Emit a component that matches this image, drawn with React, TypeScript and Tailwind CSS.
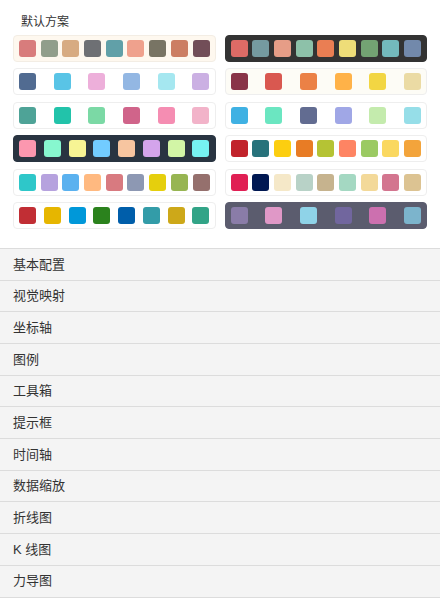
const plans: { bg: string; border: string; colors: string[] }[] = [
  { bg: "#fef8ef", border: "#f3ede4", colors: ["#d87c7c", "#919e8b", "#d7ab82", "#6e7074", "#61a0a8", "#efa18d", "#787464", "#cc7e63", "#724e58"] },
  { bg: "#333333", border: "#333333", colors: ["#dd6b66", "#759aa0", "#e69d87", "#8dc1a9", "#ea7e53", "#eedd78", "#73a373", "#73b9bc", "#7289ab"] },
  { bg: "#ffffff", border: "#eeeeee", colors: ["#516b91", "#59c4e6", "#edafda", "#93b7e3", "#a5e7f0", "#cbb0e3"] },
  { bg: "#fdfcf6", border: "#eeeeee", colors: ["#893448", "#d95850", "#eb8146", "#ffb248", "#f2d643", "#ebdba4"] },
  { bg: "#ffffff", border: "#eeeeee", colors: ["#4ea397", "#22c3aa", "#7bd9a5", "#d0648a", "#f58db2", "#f2b3c9"] },
  { bg: "#ffffff", border: "#eeeeee", colors: ["#3fb1e3", "#6be6c1", "#626c91", "#a0a7e6", "#c4ebad", "#96dee8"] },
  { bg: "#293441", border: "#293441", colors: ["#fc97af", "#87f7cf", "#f7f494", "#72ccff", "#f7c5a0", "#d4a4eb", "#d2f5a6", "#76f2f2"] },
  { bg: "#ffffff", border: "#eeeeee", colors: ["#c1232b", "#27727b", "#fcce10", "#e87c25", "#b5c334", "#fe8463", "#9bca63", "#fad860", "#f3a43b"] },
  { bg: "#ffffff", border: "#eeeeee", colors: ["#2ec7c9", "#b6a2de", "#5ab1ef", "#ffb980", "#d87a80", "#8d98b3", "#e5cf0d", "#97b552", "#95706d"] },
  { bg: "#ffffff", border: "#eeeeee", colors: ["#e01f54", "#001852", "#f5e8c8", "#b8d2c7", "#c6b38e", "#a4d8c2", "#f3d999", "#d3758f", "#dcc392"] },
  { bg: "#ffffff", border: "#eeeeee", colors: ["#c12e34", "#e6b600", "#0098d9", "#2b821d", "#005eaa", "#339ca8", "#cda819", "#32a487"] },
  { bg: "#5b5c6e", border: "#5b5c6e", colors: ["#8a7ca8", "#e098c7", "#8fd3e8", "#71669e", "#cc70af", "#7cb4cc"] },
];

const sections = ["基本配置", "视觉映射", "坐标轴", "图例", "工具箱", "提示框", "时间轴", "数据缩放", "折线图", "K 线图", "力导图"];

export default function App() {
  return (
    <div
      className="w-[440px] min-h-[599px] bg-white text-[#333]"
      style={{ fontFamily: '"Liberation Sans", "Noto Sans CJK SC", sans-serif' }}
    >
      <div className="px-[13px] pt-[14px]">
        <div className="pl-[8px] text-[12px] leading-[16px]">默认方案</div>
        <div className="mt-[5px] grid grid-cols-2 gap-x-[9px] gap-y-[6.4px]">
          {plans.map((p, i) => (
            <div
              key={i}
              className="flex h-[27px] items-center justify-between rounded-[4px] border px-[5px]"
              style={{ backgroundColor: p.bg, borderColor: p.border }}
            >
              {p.colors.map((c) => (
                <span key={c} className="h-[17px] w-[17px] rounded-[3px]" style={{ backgroundColor: c }} />
              ))}
            </div>
          ))}
        </div>
      </div>

      <div className="mt-[19px] border-b border-[#dcdcdc]">
        {sections.map((s) => (
          <div
            key={s}
            className="flex h-[31.7px] items-center border-t border-[#dcdcdc] bg-[#f4f4f4] pl-[13px] text-[13px]"
          >
            {s}
          </div>
        ))}
      </div>
    </div>
  );
}
